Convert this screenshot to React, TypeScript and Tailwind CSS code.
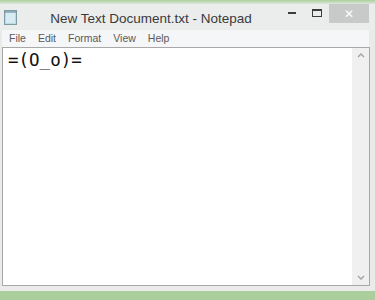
import React from "react";

const NotepadIcon: React.FC = () => (
  <svg width="13" height="15" viewBox="0 0 13 15">
    <rect x="0.5" y="0.5" width="12" height="14" fill="#b9dbe6" stroke="#7f9aa5" />
    <rect x="2" y="2" width="9" height="11" fill="#d6ecf2" />
    <line x1="0.5" y1="2" x2="12.5" y2="2" stroke="#5e7d88" />
  </svg>
);

const App: React.FC = () => {
  return (
    <div className="w-[375px] h-[300px] flex flex-col bg-[#e9eaea] overflow-hidden font-['Liberation_Sans',sans-serif]">
      {/* Frame top */}
      <div className="h-[4px] bg-gradient-to-b from-[#a9d09a] to-[#dfe6dc]" />

      {/* Title bar */}
      <div className="h-[26px] flex items-start bg-[#ebecec] relative">
        <div className="pl-[4px] pt-[6px]">
          <NotepadIcon />
        </div>
        <div className="flex-1 text-center text-[13.5px] text-[#3a3a3a] pt-[5px] pl-[6px]">
          New Text Document.txt - Notepad
        </div>
        <div className="flex items-start">
          <div className="w-[25px] h-[18px] flex items-center justify-center">
            <div className="w-[8px] h-[2px] bg-[#3c3c3c]" />
          </div>
          <div className="w-[25px] h-[18px] flex items-center justify-center">
            <div className="w-[10px] h-[8px] border border-[#3c3c3c] border-t-[2px]" />
          </div>
          <div className="w-[40px] h-[19px] bg-[#c8c9c9] flex items-center justify-center text-white text-[12px] leading-none">
            ✕
          </div>
          <div className="w-[6px]" />
        </div>
      </div>

      {/* Menu bar */}
      <div className="h-[17px] flex items-center gap-[12px] pl-[7px] bg-[#f5f6f7] text-[10.5px] text-[#5a5a5a] ml-[2px] mr-[6px]">
        <span>File</span>
        <span>Edit</span>
        <span>Format</span>
        <span>View</span>
        <span>Help</span>
      </div>

      {/* Edit area */}
      <div className="flex-1 flex ml-[2px] mr-[5px] border border-[#a8a8a8] bg-white">
        <div className="flex-1 px-[5px] pt-[2px] text-[17.5px] font-['DejaVu_Sans_Mono',monospace] text-[#111] leading-[20px]">
          =(O_o)=
        </div>
        <div className="w-[17px] bg-[#f0f0f0] flex flex-col items-center justify-between py-[5px]">
          <svg width="8" height="5" viewBox="0 0 8 5">
            <path d="M1 4 L4 1 L7 4" fill="none" stroke="#a0a0a0" strokeWidth="1.3" />
          </svg>
          <svg width="8" height="5" viewBox="0 0 8 5">
            <path d="M1 1 L4 4 L7 1" fill="none" stroke="#a0a0a0" strokeWidth="1.3" />
          </svg>
        </div>
      </div>

      {/* Frame bottom */}
      <div className="h-[5px] bg-[#ebebeb]" />
      <div className="h-[9px] bg-[#aacf9c]" />
    </div>
  );
};

export default App;
